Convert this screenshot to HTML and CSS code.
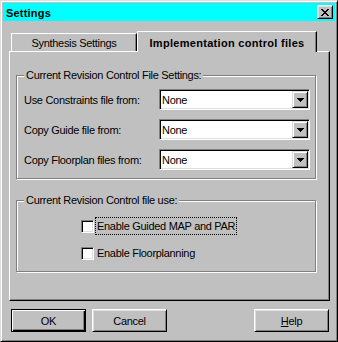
FILE: index.html
```html
<!DOCTYPE html>
<html>
<head>
<meta charset="utf-8">
<link rel="stylesheet" href="styles.css">
</head>
<body>
<div class="window">
  <div class="titlebar">
    <span class="title">Settings</span>
    <span class="close"><svg width="8" height="7" viewBox="0 0 8 7" shape-rendering="crispEdges"><path d="M0 0h2v1H0zM6 0h2v1H6zM1 1h2v1H1zM5 1h2v1H5zM2 2h4v1H2zM3 3h2v1H3zM2 4h4v1H2zM1 5h2v1H1zM5 5h2v1H5zM0 6h2v1H0zM6 6h2v1H6z" fill="#000"/></svg></span>
  </div>
  <div class="client">
    <div class="tabs">
      <div class="tab">Synthesis Settings</div>
      <div class="tab active">Implementation control files</div>
    </div>
    <div class="panel">
      <div class="group g1">
        <div class="group-title">Current Revision Control File Settings:</div>
        <div class="rows">
          <span class="label">Use Constraints file from:</span>
          <div class="combo"><span class="value">None</span><span class="drop"><svg width="7" height="4" viewBox="0 0 7 4" shape-rendering="crispEdges"><path d="M0 0h7v1H0zM1 1h5v1H1zM2 2h3v1H2zM3 3h1v1H3z" fill="#000"/></svg></span></div>
          <span class="label">Copy Guide file from:</span>
          <div class="combo"><span class="value">None</span><span class="drop"><svg width="7" height="4" viewBox="0 0 7 4" shape-rendering="crispEdges"><path d="M0 0h7v1H0zM1 1h5v1H1zM2 2h3v1H2zM3 3h1v1H3z" fill="#000"/></svg></span></div>
          <span class="label">Copy Floorplan files from:</span>
          <div class="combo"><span class="value">None</span><span class="drop"><svg width="7" height="4" viewBox="0 0 7 4" shape-rendering="crispEdges"><path d="M0 0h7v1H0zM1 1h5v1H1zM2 2h3v1H2zM3 3h1v1H3z" fill="#000"/></svg></span></div>
        </div>
      </div>
      <div class="group g2">
        <div class="group-title">Current Revision Control file use:</div>
        <div class="checks">
          <div class="check"><span class="box"></span><span class="cb-label focus">Enable Guided MAP and PAR</span></div>
          <div class="check"><span class="box"></span><span class="cb-label">Enable Floorplanning</span></div>
        </div>
      </div>
    </div>
    <div class="buttons">
      <div class="btn default">OK</div>
      <div class="btn">Cancel</div>
      <div class="btn help"><u>H</u>elp</div>
    </div>
  </div>
</div>
</body>
</html>
```
FILE: styles.css
```css
* { box-sizing: border-box; }
html, body { margin: 0; padding: 0; }
body {
  font-family: "Liberation Sans", Arial, sans-serif;
  font-size: 11px;
  color: #000;
  background: #c0c0c0;
}
.window {
  width: 338px;
  height: 342px;
  background: #c0c0c0;
  border: 1px solid;
  border-color: #dfdfdf #000 #000 #dfdfdf;
  box-shadow: inset 1px 1px #fff, inset -1px -1px #808080;
  padding: 2px;
  display: flex;
  flex-direction: column;
}
.titlebar {
  height: 18px;
  background: #00ffff;
  display: flex;
  align-items: center;
  justify-content: space-between;
  padding: 0 2px 0 3px;
}
.title {
  font-weight: bold;
  letter-spacing: 0.2px;
  line-height: 14px;
  padding-top: 1px;
}
.close {
  width: 16px;
  height: 14px;
  border: 1px solid;
  border-color: #fff #000 #000 #fff;
  box-shadow: inset 1px 1px #dfdfdf, inset -1px -1px #808080;
  background: #c0c0c0;
  display: flex;
  align-items: center;
  justify-content: center;
}
.close svg { display: block; }
.client {
  flex: 1;
  padding: 0 5px 0 6px;
}
.tabs {
  display: flex;
  align-items: flex-end;
  height: 20px;
  margin-top: 10px;
  padding-left: 2px;
}
.tab {
  height: 18px;
  width: 126px;
  border-top: 1px solid #fff;
  border-left: 1px solid #fff;
  border-right: 1px solid #000;
  box-shadow: inset -1px 0 #808080;
  text-align: center;
  padding-top: 3px;
  line-height: 13px;
  letter-spacing: -0.3px;
  white-space: nowrap;
}
.tab.active {
  height: 21px;
  width: 180px;
  margin-bottom: -1px;
  position: relative;
  z-index: 1;
  background: #c0c0c0;
  font-weight: bold;
  letter-spacing: 0.3px;
  padding-top: 5px;
}
.panel {
  height: 250px;
  border: 1px solid;
  border-color: #fff #000 #000 #fff;
  box-shadow: inset -1px -1px #808080;
  padding: 23px 0 0 6px;
}
.group {
  width: 300px;
  border: 1px solid #808080;
  box-shadow: inset 1px 1px #fff, 1px 1px #fff;
  padding: 0 0 0 7px;
}
.g1 { padding-bottom: 8px; }
.g2 { margin-top: 21px; padding-bottom: 9px; }
.group-title {
  width: fit-content;
  margin-top: -7px;
  padding: 0 2px;
  background: #c0c0c0;
  line-height: 13px;
  letter-spacing: -0.3px;
  white-space: nowrap;
}
.rows {
  display: grid;
  grid-template-columns: 135px 151px;
  grid-auto-rows: 21px;
  row-gap: 9px;
  margin-top: 7px;
  align-items: center;
}
.label {
  line-height: 13px;
  letter-spacing: -0.3px;
  white-space: nowrap;
  padding-top: 1px;
}
.combo {
  height: 21px;
  background: #fff;
  border: 1px solid;
  border-color: #808080 #fff #fff #808080;
  box-shadow: inset 1px 1px #000, inset -1px -1px #dfdfdf;
  display: flex;
  align-items: center;
  justify-content: space-between;
  padding: 0 1px 0 2px;
}
.value {
  line-height: 13px;
  letter-spacing: -0.3px;
  padding-top: 1px;
}
.drop {
  width: 16px;
  height: 17px;
  background: #c0c0c0;
  border: 1px solid;
  border-color: #dfdfdf #000 #000 #dfdfdf;
  box-shadow: inset 1px 1px #fff, inset -1px -1px #808080;
  display: flex;
  align-items: center;
  justify-content: center;
}
.drop svg { display: block; }
.checks {
  margin-top: 10px;
  margin-left: 57px;
  display: flex;
  flex-direction: column;
  gap: 9px;
}
.check {
  display: flex;
  align-items: center;
  height: 18px;
  gap: 1px;
}
.box {
  width: 13px;
  height: 13px;
  background: #fff;
  border: 1px solid;
  border-color: #808080 #fff #fff #808080;
  box-shadow: inset 1px 1px #000, inset -1px -1px #dfdfdf;
}
.cb-label {
  border: 1px dotted transparent;
  padding: 1px 1px 1px 1px;
  line-height: 14px;
  letter-spacing: -0.3px;
  white-space: nowrap;
}
.cb-label.focus { border-color: #000; }
.buttons {
  display: flex;
  margin-top: 8px;
  padding: 0 1px 0 2px;
}
.btn {
  width: 75px;
  height: 23px;
  border: 1px solid;
  border-color: #fff #000 #000 #fff;
  box-shadow: inset 1px 1px #dfdfdf, inset -1px -1px #808080;
  display: flex;
  align-items: center;
  justify-content: center;
  letter-spacing: -0.3px;
  line-height: 13px;
  padding-top: 1px;
}
.btn + .btn { margin-left: 6px; }
.btn.default {
  border-color: #000;
  box-shadow: inset 1px 1px #fff, inset -1px -1px #000, inset -2px -2px #808080;
}
.btn.help { margin-left: auto; }
.btn u { text-decoration: underline; }
```
